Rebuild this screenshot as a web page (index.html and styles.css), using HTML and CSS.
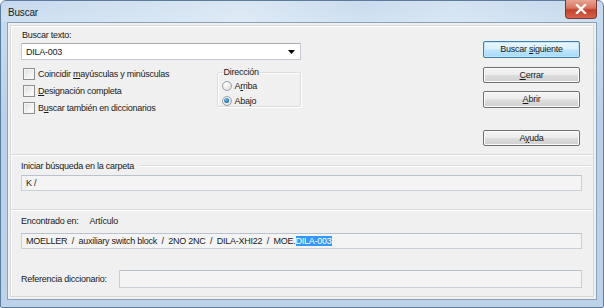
FILE: index.html
```html
<!DOCTYPE html>
<html>
<head>
<meta charset="utf-8">
<link rel="stylesheet" href="styles.css">
</head>
<body>
<div class="window">
  <div class="titlebar">
    <span class="title">Buscar</span>
    <div class="close">
      <svg width="12" height="10" viewBox="0 0 12 10"><path d="M2 1 L10 9 M10 1 L2 9" stroke="#fff" stroke-width="2.4" stroke-linecap="square" fill="none"/></svg>
    </div>
  </div>
  <div class="client">
    <div class="frame">
      <section class="top">
        <div class="leftcol">
          <div class="lbl">Buscar texto:</div>
          <div class="combo">
            <span>DILA-003</span>
            <svg class="arrow" width="7" height="4" viewBox="0 0 7 4"><path d="M0 0 H7 L3.5 4 Z" fill="#000"/></svg>
          </div>
          <div class="opts">
            <div class="checks">
              <div class="check"><span class="box"></span><span>Coincidir <u>m</u>ayúsculas y minúsculas</span></div>
              <div class="check"><span class="box"></span><span><u>D</u>esignación completa</span></div>
              <div class="check"><span class="box"></span><span>B<u>u</u>scar también en diccionarios</span></div>
            </div>
            <div class="dir">
              <div class="legend">Dirección</div>
              <div class="radio"><span class="rb"></span><span>A<u>r</u>riba</span></div>
              <div class="radio"><span class="rb on"></span><span>Aba<u>j</u>o</span></div>
            </div>
          </div>
        </div>
        <div class="buttons">
          <div class="btn default"><span>Buscar <u>s</u>iguiente</span></div>
          <div class="btn"><span><u>C</u>errar</span></div>
          <div class="btn"><span><u>A</u>brir</span></div>
          <div class="btn gapbtn"><span>A<u>y</u>uda</span></div>
        </div>
      </section>
      <section class="folder">
        <div class="grouphead"><span>Iniciar búsqueda en la carpeta</span><span class="gline"></span></div>
        <div class="field">K /</div>
      </section>
      <section class="found">
        <div class="lbl2"><span>Encontrado en:</span><span class="val">Artículo</span></div>
        <div class="field"><span>MOELLER &nbsp;/ &nbsp;auxiliary switch block &nbsp;/ &nbsp;2NO 2NC &nbsp;/ &nbsp;DILA-XHI22 &nbsp;/ &nbsp;MOE.<span class="sel">DILA-003</span></span></div>
        <div class="refrow"><span class="reflbl">Referencia diccionario:</span><div class="field reffield"></div></div>
      </section>
    </div>
  </div>
</div>
</body>
</html>
```

FILE: styles.css
```css
* { box-sizing: border-box; }
html, body { margin: 0; padding: 0; }
body {
  width: 604px;
  height: 308px;
  overflow: hidden;
  font-family: "Liberation Sans", Arial, sans-serif;
  font-size: 9px;
  letter-spacing: -0.25px;
  color: #1a1a1a;
  background: #fff;
}
u { text-decoration: underline; text-underline-offset: 1px; }

.window {
  width: 604px;
  height: 308px;
  border: 1px solid #5d7c9e;
  border-radius: 6px 6px 2px 2px;
  background: linear-gradient(180deg, #bcd3ea 0%, #c6dbef 8%, #b9d0e8 40%, #bdd3ea 100%);
  display: flex;
  flex-direction: column;
  position: relative;
}
.titlebar {
  height: 21px;
  display: flex;
  align-items: center;
  padding-left: 7px;
  background: linear-gradient(90deg, rgba(255,255,255,0.15) 0%, rgba(255,255,255,0.45) 40%, rgba(255,255,255,0.2) 60%, rgba(255,255,255,0.35) 75%, rgba(255,255,255,0.1) 100%);
}
.title {
  font-size: 10px;
  letter-spacing: -0.2px;
  color: #1b1b1b;
  margin-top: 1px;
}
.close {
  position: absolute;
  right: 6px;
  top: -1px;
  width: 32px;
  height: 19px;
  border: 1px solid #7a3a33;
  border-top: none;
  border-radius: 0 0 4px 4px;
  background: linear-gradient(180deg, #e8a493 0%, #d9735f 45%, #c2412a 55%, #d7624a 100%);
  display: flex;
  align-items: center;
  justify-content: center;
}

.client {
  flex: 1;
  margin: 0 6px 7px 6px;
  border: 1px solid #8aa1b8;
  background: #f0f0f0;
  padding: 2px;
  display: flex;
}
.frame {
  flex: 1;
  border: 1px solid #d9d9d9;
  box-shadow: inset 1px 1px 0 #fff;
  display: flex;
  flex-direction: column;
}

.top {
  height: 129px;
  border-bottom: 1px solid #dadada;
  box-shadow: 0 1px 0 #fff;
  display: flex;
  padding: 3px 0 0 10px;
}
.leftcol { width: 280px; }
.lbl { height: 13px; line-height: 13px; padding-left: 1px; }
.combo {
  margin-top: 1px;
  height: 17px;
  background: #fff;
  border: 1px solid #c5cad2;
  border-top-color: #abadb3;
  display: flex;
  align-items: center;
  justify-content: space-between;
  padding: 0 5px 0 4px;
}
.opts {
  display: flex;
  margin-top: 5px;
}
.checks { width: 197px; }
.check {
  height: 17px;
  display: flex;
  align-items: center;
  gap: 3px;
  padding-left: 2px;
}
.box {
  width: 12px;
  height: 12px;
  border: 1px solid #8f8f8f;
  background: linear-gradient(135deg, #dcdcdc 0%, #f4f4f4 60%, #fff 100%);
  box-shadow: inset 0 0 0 1px #f5f5f5;
}
.dir {
  width: 85px;
  height: 35px;
  margin-top: 7px;
  border: 1px solid #dcdcdc;
  box-shadow: inset 1px 1px 0 #fff, 1px 1px 0 #fff;
  border-radius: 2px;
  position: relative;
  padding: 5px 0 0 4px;
}
.legend {
  position: absolute;
  left: 5px;
  top: -7px;
  background: #f0f0f0;
  padding: 0 1px;
  line-height: 12px;
}
.radio {
  height: 15px;
  display: flex;
  align-items: center;
  gap: 3px;
}
.rb {
  width: 10px;
  height: 10px;
  border-radius: 50%;
  border: 1px solid #9aa3ab;
  background: radial-gradient(circle at 35% 35%, #fff 0%, #e4e4e4 70%, #d0d0d0 100%);
  display: inline-flex;
  align-items: center;
  justify-content: center;
}
.rb.on::after {
  content: "";
  width: 5px;
  height: 5px;
  border-radius: 50%;
  background: radial-gradient(circle at 35% 35%, #6fc0f0 0%, #1f6fa8 70%, #154f80 100%);
}

.buttons {
  margin-left: 182px;
  padding-top: 12px;
  display: flex;
  flex-direction: column;
}
.btn {
  width: 97px;
  height: 17px;
  border: 1px solid #707070;
  border-radius: 2px;
  background: linear-gradient(180deg, #f4f4f4 0%, #ececec 48%, #dddddd 52%, #d0d0d0 100%);
  box-shadow: inset 0 0 0 1px #fbfbfb;
  display: flex;
  align-items: center;
  justify-content: center;
  margin-bottom: 8px;
}
.btn.default {
  border-color: #3c7fb1;
  box-shadow: inset 0 0 0 1px #bfe6f8;
  background: linear-gradient(180deg, #eaf6fd 0%, #d9f0fc 48%, #bee6fd 52%, #a7d9f5 100%);
  margin-bottom: 9px;
}
.btn.gapbtn { margin-top: 14px; }

.folder {
  height: 55px;
  border-bottom: 1px solid #dadada;
  box-shadow: 0 1px 0 #fff;
  padding: 4px 2px 0 10px;
}
.grouphead {
  display: flex;
  align-items: center;
  height: 13px;
  gap: 5px;
}
.gline {
  flex: 1;
  height: 2px;
  border-top: 1px solid #dcdcdc;
  border-bottom: 1px solid #fff;
}
.field {
  height: 16px;
  margin-top: 3px;
  margin-right: 9px;
  border: 1px solid #c9d0d8;
  border-top-color: #b8c3cf;
  background: #f4f4f4;
  display: flex;
  align-items: center;
  padding-left: 4px;
  white-space: pre;
}
.sel { background: #3399ff; color: #fff; }

.found {
  flex: 1;
  padding: 5px 2px 0 10px;
}
.lbl2 {
  height: 13px;
  line-height: 13px;
  display: flex;
}
.val { margin-left: 11px; }
.found .field { margin-top: 5px; }
.refrow {
  display: flex;
  align-items: center;
  margin-top: 21px;
}
.reflbl { width: 98px; }
.found .reffield {
  flex: 1;
  margin-top: 0;
  height: 18px;
}
```
